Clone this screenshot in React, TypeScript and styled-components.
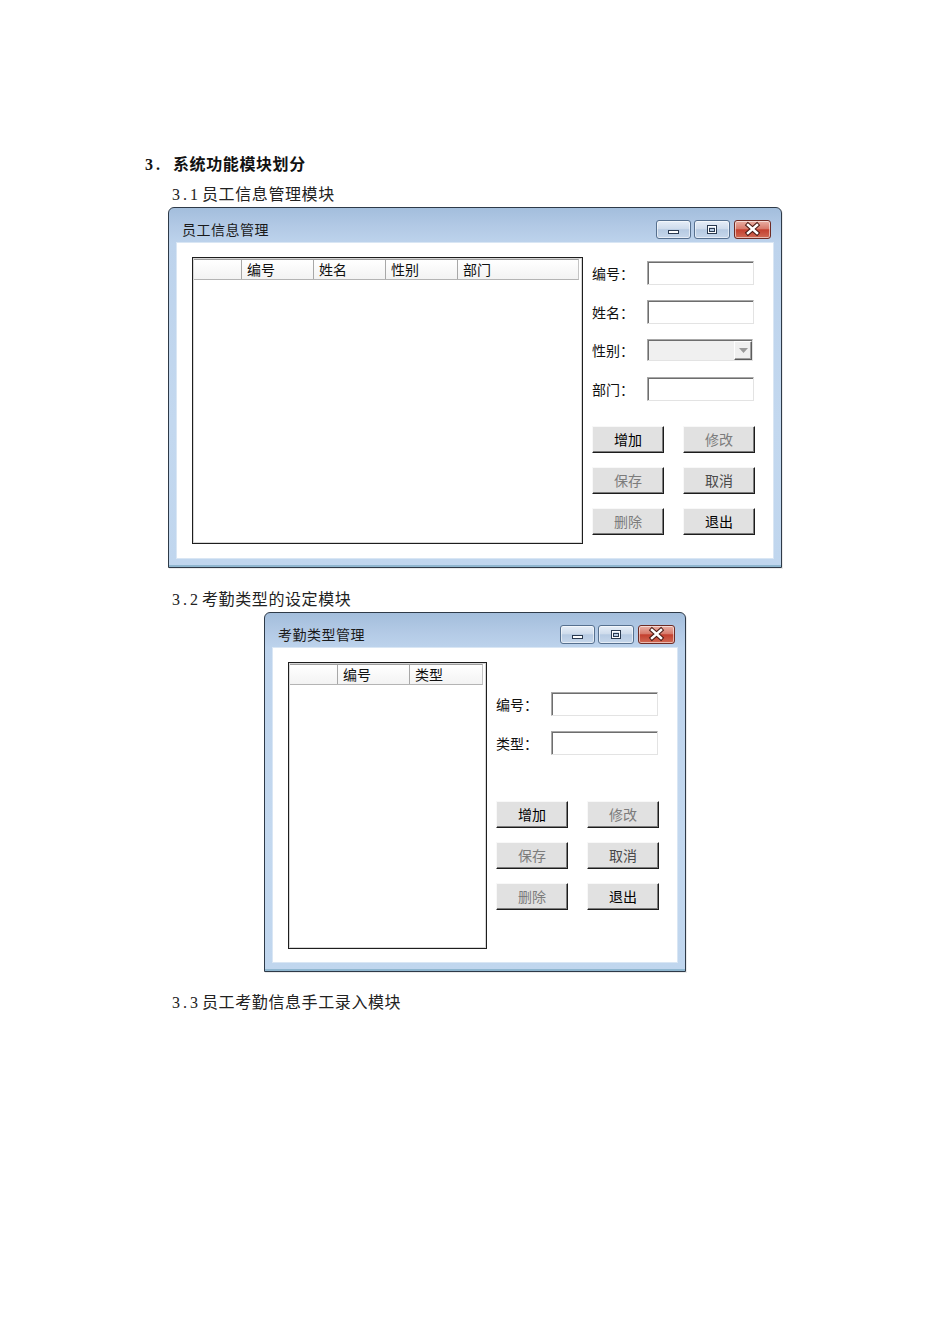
import React from "react";
import styled, { createGlobalStyle } from "styled-components";

const Global = createGlobalStyle`
  html, body { margin: 0; padding: 0; background: #ffffff; }
  body { font-family: "Noto Sans CJK SC", "Noto Sans", sans-serif; color: #000; }
`;

const Page = styled.div`
  width: 950px;
  min-height: 1344px;
  box-sizing: border-box;
  padding: 153px 0 0 145px;
`;

const Heading = styled.div`
  height: 24px;
  font-family: "Liberation Serif", "Noto Sans CJK SC", serif;
  font-weight: 700;
  font-size: 16px;
  line-height: 24px;
  letter-spacing: 0.6px;
  color: #111;
  display: flex;
  align-items: baseline;
`;

const Num = styled.span<{ $w: number }>`
  display: inline-block;
  width: ${(p) => p.$w}px;
  flex-shrink: 0;
  font-family: "Liberation Serif", serif;
  font-size: 16px;
  letter-spacing: 3px;
`;

const Sub = styled.div<{ $mt: number }>`
  height: 24px;
  margin: ${(p) => p.$mt}px 0 0 27px;
  font-family: "Noto Sans CJK SC", sans-serif;
  font-weight: 400;
  font-size: 16px;
  line-height: 24px;
  letter-spacing: 0.6px;
  color: #222;
  display: flex;
  align-items: baseline;
`;

const Win = styled.div<{ $w: number; $h: number; $ml: number }>`
  margin: 2px 0 0 ${(p) => p.$ml}px;
  width: ${(p) => p.$w}px;
  height: ${(p) => p.$h}px;
  box-sizing: border-box;
  border: 1px solid #2e3a48;
  border-radius: 6px 6px 0 0;
  background: linear-gradient(
    to bottom,
    #a3bedc 0px,
    #b2c9e5 18px,
    #bdd3ec 35px,
    #c3d8ef 60%,
    #c0d6ee 100%
  );
  box-shadow: 1px 1px 0 rgba(0, 0, 0, 0.08), inset 0 -2px 0 #8fb6cf;
  display: flex;
  flex-direction: column;
  padding: 0 8px 9px 8px;
`;

const TitleBar = styled.div`
  height: 35px;
  display: flex;
  align-items: flex-start;
  justify-content: space-between;
  padding: 11px 2px 0 5px;
  box-sizing: border-box;
`;

const Title = styled.div`
  font-size: 14px;
  line-height: 20px;
  letter-spacing: 0.5px;
  color: #1a1a1a;
`;

const Controls = styled.div`
  display: flex;
  gap: 3px;
  margin-top: 1px;
`;

const CtlBtn = styled.div<{ $w: number; $close?: boolean }>`
  width: ${(p) => p.$w}px;
  height: 19px;
  box-sizing: border-box;
  border-radius: 3px;
  border: 1px solid ${(p) => (p.$close ? "#6e2b24" : "#56708f")};
  background: ${(p) =>
    p.$close
      ? "linear-gradient(to bottom, #e9b0a5 0%, #d87b6c 45%, #c4402f 52%, #d06a55 100%)"
      : "linear-gradient(to bottom, #e6eef8 0%, #cfdcec 45%, #b6cae2 52%, #c6d7eb 100%)"};
  box-shadow: inset 0 0 0 1px rgba(255, 255, 255, 0.55);
  display: flex;
  align-items: center;
  justify-content: center;
  margin-left: ${(p) => (p.$close ? 1 : 0)}px;
`;

const Client = styled.div`
  flex: 1;
  background: #ffffff;
  box-shadow: 0 0 0 1px #d9e6f4;
  display: flex;
  align-items: flex-start;
  padding: 0 0 0 15px;
  box-sizing: border-box;
`;

const ListView = styled.div<{ $w: number }>`
  margin-top: 14px;
  width: ${(p) => p.$w}px;
  height: 287px;
  box-sizing: border-box;
  border: 1px solid #1e1e1e;
  padding: 1px;
  background: #fff;
  box-shadow: inset 0 0 0 1px #d6d6d6;
  flex-shrink: 0;
`;

const Header = styled.div`
  display: inline-flex;
  height: 21px;
  box-sizing: border-box;
  background: linear-gradient(to bottom, #ffffff, #f3f3f3);
  border-top: 1px solid #9c9c9c;
  border-bottom: 1px solid #b4b4b4;
  border-right: 1px solid #c4c4c4;
`;

const HeadCell = styled.div<{ $w: number }>`
  width: ${(p) => p.$w}px;
  box-sizing: border-box;
  border-right: 1px solid #a8a8a8;
  padding-left: 5px;
  font-size: 14px;
  line-height: 19px;
  color: #111;
  &:last-child {
    border-right: none;
  }
`;

const Form = styled.div<{ $pt: number }>`
  margin-left: 9px;
  padding-top: ${(p) => p.$pt}px;
  display: flex;
  flex-direction: column;
`;

const Row = styled.div<{ $h: number }>`
  height: ${(p) => p.$h}px;
  display: flex;
  align-items: center;
`;

const Label = styled.div`
  width: 55px;
  font-size: 14px;
  line-height: 20px;
  color: #111;
`;

const Input = styled.div`
  width: 107px;
  height: 24px;
  box-sizing: border-box;
  background: #fff;
  border-top: 1px solid #a8a8a8;
  border-left: 1px solid #a8a8a8;
  border-right: 1px solid #e3e3e3;
  border-bottom: 1px solid #e3e3e3;
  box-shadow: inset 1px 1px 0 #6e6e6e;
`;

const Combo = styled.div`
  width: 106px;
  height: 22px;
  box-sizing: border-box;
  background: #f0f0f0;
  border-top: 1px solid #a8a8a8;
  border-left: 1px solid #a8a8a8;
  border-right: 1px solid #e3e3e3;
  border-bottom: 1px solid #e3e3e3;
  box-shadow: inset 1px 1px 0 #6e6e6e;
  display: flex;
  justify-content: flex-end;
  padding: 1px 0 0 1px;
`;

const DropBtn = styled.div`
  width: 18px;
  height: 19px;
  box-sizing: border-box;
  background: #f0f0f0;
  border-top: 1px solid #ffffff;
  border-left: 1px solid #ffffff;
  border-right: 1px solid #5c5c5c;
  border-bottom: 1px solid #5c5c5c;
  box-shadow: inset -1px -1px 0 #a0a0a0;
  display: flex;
  align-items: center;
  justify-content: center;
`;

const Buttons = styled.div<{ $mt: number }>`
  margin-top: ${(p) => p.$mt}px;
  display: grid;
  grid-template-columns: 72px 72px;
  column-gap: 19px;
  row-gap: 14px;
`;

const Btn = styled.div<{ $c: string }>`
  height: 27px;
  box-sizing: border-box;
  background: #e1e1e1;
  border-top: 1px solid #f8f8f8;
  border-left: 1px solid #f8f8f8;
  border-right: 1px solid #1c1c1c;
  border-bottom: 1px solid #1c1c1c;
  box-shadow: inset -1px -1px 0 #7c7c7c;
  display: flex;
  align-items: center;
  justify-content: center;
  font-size: 14px;
  color: ${(p) => p.$c};
  padding-bottom: 1px;
`;

const MinIcon = () => (
  <svg width="33" height="17" viewBox="0 0 33 17">
    <rect x="11.5" y="9.5" width="10" height="3" fill="#ffffff" stroke="#2a3a50" />
  </svg>
);

const MaxIcon = () => (
  <svg width="34" height="17" viewBox="0 0 34 17">
    <rect x="12.5" y="4.5" width="9" height="8" fill="none" stroke="#2a3a50" />
    <rect x="13.5" y="5.5" width="7" height="6" fill="none" stroke="#ffffff" />
    <rect x="14.5" y="7.5" width="5" height="3" fill="none" stroke="#2a3a50" />
  </svg>
);

const CloseIcon = () => (
  <svg width="35" height="17" viewBox="0 0 35 17">
    <path d="M13 4 L22 12 M22 4 L13 12" stroke="#4a1a14" strokeWidth="4.5" strokeLinecap="square" />
    <path d="M13 4 L22 12 M22 4 L13 12" stroke="#ffffff" strokeWidth="2.5" strokeLinecap="square" />
  </svg>
);

const Arrow = () => (
  <svg width="9" height="5" viewBox="0 0 9 5">
    <path d="M0 0 L9 0 L4.5 5 Z" fill="#9a9a9a" />
  </svg>
);

type BtnDef = { t: string; c: string };
const BTNS: BtnDef[] = [
  { t: "增加", c: "#000000" },
  { t: "修改", c: "#7c7c7c" },
  { t: "保存", c: "#7c7c7c" },
  { t: "取消", c: "#4a4a4a" },
  { t: "删除", c: "#7c7c7c" },
  { t: "退出", c: "#000000" },
];

type FieldDef = { label: string; combo?: boolean };

const Window: React.FC<{
  title: string;
  w: number;
  h: number;
  ml: number;
  listW: number;
  cols: { t: string; w: number }[];
  fields: FieldDef[];
  rowH: number;
  formPt: number;
  btnMt: number;
}> = ({ title, w, h, ml, listW, cols, fields, rowH, formPt, btnMt }) => (
  <Win $w={w} $h={h} $ml={ml}>
    <TitleBar>
      <Title>{title}</Title>
      <Controls>
        <CtlBtn $w={35}>
          <MinIcon />
        </CtlBtn>
        <CtlBtn $w={36}>
          <MaxIcon />
        </CtlBtn>
        <CtlBtn $w={37} $close>
          <CloseIcon />
        </CtlBtn>
      </Controls>
    </TitleBar>
    <Client>
      <ListView $w={listW}>
        <Header>
          {cols.map((c, i) => (
            <HeadCell key={i} $w={c.w}>
              {c.t}
            </HeadCell>
          ))}
        </Header>
      </ListView>
      <Form $pt={formPt}>
        {fields.map((f) => (
          <Row key={f.label} $h={rowH}>
            <Label>{f.label}：</Label>
            {f.combo ? (
              <Combo>
                <DropBtn>
                  <Arrow />
                </DropBtn>
              </Combo>
            ) : (
              <Input />
            )}
          </Row>
        ))}
        <Buttons $mt={btnMt}>
          {BTNS.map((b) => (
            <Btn key={b.t} $c={b.c}>
              {b.t}
            </Btn>
          ))}
        </Buttons>
      </Form>
    </Client>
  </Win>
);

export default function App() {
  return (
    <Page>
      <Global />
      <Heading>
        <Num $w={28}>3.</Num>
        系统功能模块划分
      </Heading>
      <Sub $mt={4}>
        <Num $w={30}>3.1</Num>员工信息管理模块
      </Sub>
      <Window
        title="员工信息管理"
        w={614}
        h={361}
        ml={23}
        listW={391}
        cols={[
          { t: "", w: 48 },
          { t: "编号", w: 72 },
          { t: "姓名", w: 72 },
          { t: "性别", w: 72 },
          { t: "部门", w: 120 },
        ]}
        fields={[{ label: "编号" }, { label: "姓名" }, { label: "性别", combo: true }, { label: "部门" }]}
        rowH={38.5}
        formPt={11}
        btnMt={18}
      />
      <Sub $mt={18}>
        <Num $w={30}>3.2</Num>考勤类型的设定模块
      </Sub>
      <Window
        title="考勤类型管理"
        w={422}
        h={360}
        ml={119}
        listW={199}
        cols={[
          { t: "", w: 48 },
          { t: "编号", w: 72 },
          { t: "类型", w: 72 },
        ]}
        fields={[{ label: "编号" }, { label: "类型" }]}
        rowH={39}
        formPt={36}
        btnMt={39}
      />
      <Sub $mt={17}>
        <Num $w={30}>3.3</Num>员工考勤信息手工录入模块
      </Sub>
    </Page>
  );
}
